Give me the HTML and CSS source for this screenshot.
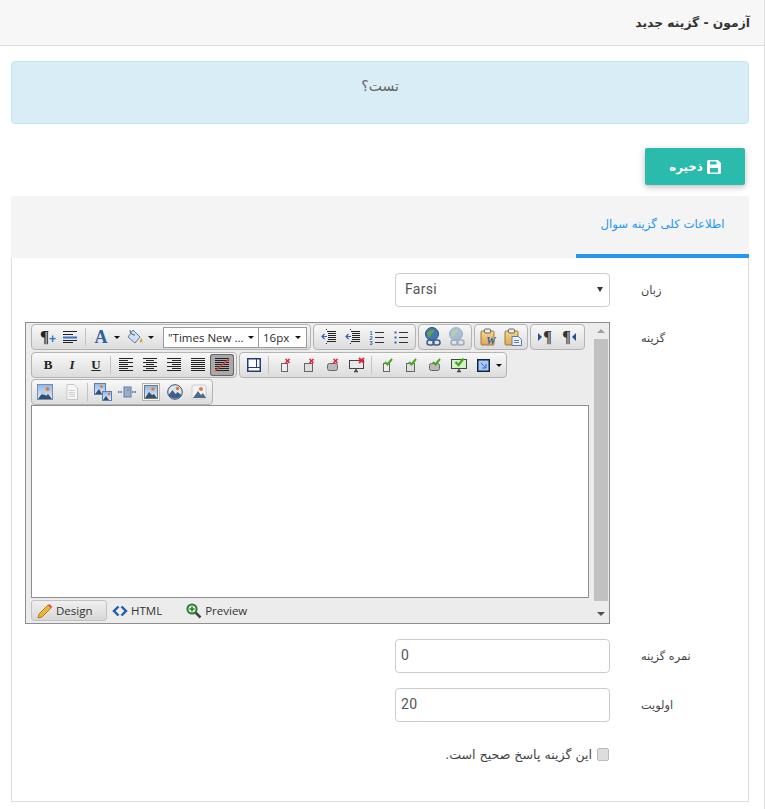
FILE: index.html
```html
<!DOCTYPE html>
<html lang="fa" dir="rtl">
<head>
<meta charset="utf-8">
<title>آزمون - گزینه جدید</title>
<link rel="stylesheet" href="styles.css">
</head>
<body>
<svg class="defs" width="0" height="0" aria-hidden="true">
  <defs>
    <linearGradient id="sky" x1="0" y1="0" x2="0" y2="1"><stop offset="0" stop-color="#8fb6e8"/><stop offset="1" stop-color="#e6eefa"/></linearGradient>
    <linearGradient id="clip" x1="0" y1="0" x2="0" y2="1"><stop offset="0" stop-color="#f6d68c"/><stop offset="1" stop-color="#e0a850"/></linearGradient>
    <symbol id="pic" viewBox="0 0 16 16"><rect x=".5" y=".5" width="15" height="15" fill="url(#sky)" stroke="#6f8fb5"/><circle cx="10.500" cy="5" r="2" fill="#e8793a"/><path d="M1 15l5-7 3 4 2-2 4 5z" fill="#34506e"/><path d="M6 8l-2 3 2-1 1 1 1-.5z" fill="#dfe8f2"/></symbol>
    <symbol id="pic2" viewBox="0 0 16 16"><rect x="1" y="1" width="14" height="14" rx="2" fill="#f3f4f6" stroke="#c9ced6"/><circle cx="10" cy="5" r="2" fill="#e8793a"/><path d="M2 14l5-7 3 4 2-2 3 5z" fill="#4f6b8a"/></symbol>
    <symbol id="doc" viewBox="0 0 16 16"><path d="M3 .5h7l3.500 3.500v11.500h-10.500z" fill="#f6f6f6" stroke="#c8c8c8"/><path d="M5 6.500h6M5 8.500h6M5 10.500h6M5 12.500h6" stroke="#cfcfcf"/></symbol>
    <symbol id="pics" viewBox="0 0 18 18"><rect x=".5" y=".5" width="11" height="11" fill="url(#sky)" stroke="#5d7ea8"/><circle cx="7.500" cy="3.500" r="1.500" fill="#e8793a"/><path d="M1 11l4-5 3 5z" fill="#34506e"/><rect x="8.500" y="8.500" width="9" height="9" fill="url(#sky)" stroke="#5d7ea8"/><path d="M9 17l3-4 3 4z" fill="#34506e"/><circle cx="15" cy="11" r="1.200" fill="#e8793a"/></symbol>
    <symbol id="flash" viewBox="0 0 18 12"><rect x="6" y="1" width="7" height="10" fill="#8fb0d8" stroke="#5d7ea8"/><path d="M0 6h4M14 6h4" stroke="#5d7ea8" stroke-width="2" stroke-dasharray="1.500 1"/><circle cx="10" cy="4" r="1.200" fill="#e8793a"/></symbol>
    <symbol id="picbox" viewBox="0 0 18 18"><rect x=".5" y=".5" width="17" height="17" fill="#f4f4f4" stroke="#b5b5b5"/><rect x="2.500" y="2.500" width="13" height="13" fill="url(#sky)" stroke="#777"/><circle cx="11" cy="6" r="1.800" fill="#e8793a"/><path d="M3 15l4-6 3 3 2-1 3 4z" fill="#34506e"/></symbol>
    <symbol id="link" viewBox="0 0 18 20"><circle cx="8" cy="7" r="6.500" fill="#3f78b8" stroke="#2f4f78"/><path d="M3 6c2-3 5-4 7-3 1 2-2 3-3 5s-2 3-3 2z" fill="#5fa24a"/><rect x="3" y="13" width="7" height="5" rx="2.500" fill="none" stroke="#3f5e85" stroke-width="1.500"/><rect x="9" y="13" width="7" height="5" rx="2.500" fill="none" stroke="#3f5e85" stroke-width="1.500"/></symbol>
    <symbol id="tick-sm" viewBox="0 0 14 16"><rect x="3.500" y="6.500" width="6" height="8" fill="#eee" stroke="#666"/><path d="M5 5l2.500 2.500L12 2" fill="none" stroke="#45a820" stroke-width="2"/></symbol>
    <symbol id="tick-md" viewBox="0 0 14 16"><rect x="2.500" y="6.500" width="8" height="8" fill="#ddd" stroke="#666"/><path d="M5 5l2.500 2.500L12 2" fill="none" stroke="#45a820" stroke-width="2"/></symbol>
    <symbol id="tick-lg" viewBox="0 0 14 16"><rect x="1.500" y="6.500" width="10" height="7" rx="2" fill="#bbb" stroke="#666"/><path d="M5 5l2.500 2.500L12 2" fill="none" stroke="#45a820" stroke-width="2"/></symbol>
    <symbol id="tick-mon" viewBox="0 0 16 16"><rect x=".5" y="2.500" width="15" height="9" fill="#d6f0c8" stroke="#444"/><path d="M6 14.500h4M8 12v2" stroke="#444" stroke-width="1.500"/><path d="M4.500 5l3 3 5-6.500" fill="none" stroke="#3fa81c" stroke-width="2.200"/></symbol>
    <symbol id="x-sm" viewBox="0 0 14 16"><rect x="3.500" y="6.500" width="6" height="8" fill="#eee" stroke="#666"/><path d="M7.500 2l4 4M11.500 2l-4 4" stroke="#ee2040" stroke-width="1.700"/></symbol>
    <symbol id="x-md" viewBox="0 0 14 16"><rect x="2.500" y="6.500" width="8" height="8" fill="#ddd" stroke="#666"/><path d="M7.500 2l4 4M11.500 2l-4 4" stroke="#ee2040" stroke-width="1.700"/></symbol>
    <symbol id="x-lg" viewBox="0 0 14 16"><rect x="1.500" y="6.500" width="10" height="7" rx="2" fill="#bbb" stroke="#666"/><path d="M7.500 2l4 4M11.500 2l-4 4" stroke="#ee2040" stroke-width="1.700"/></symbol>
    <symbol id="x-mon" viewBox="0 0 16 16"><rect x=".5" y="3.500" width="14" height="8" fill="#e8e8e8" stroke="#444"/><path d="M5 14.500h4M7 12v2" stroke="#444" stroke-width="1.500"/><path d="M10 1l5 5M15 1l-5 5" stroke="#ee2040" stroke-width="1.800"/></symbol>
    <symbol id="indent" viewBox="0 0 16 16"><path d="M6 2.500h9M7 4.500h8M7 6.500h8M7 8.500h8M7 10.500h8M6 12.500h9M5 .5h1M5 14.500h1" stroke="#222"/><path d="M6 7.500H1M3.500 5L1 7.500 3.500 10" stroke="#2f62b8" fill="none" stroke-width="1.200"/></symbol>
    <symbol id="olist" viewBox="0 0 16 16"><path d="M6 3.500h9M6 8.500h9M6 13.500h9" stroke="#333" stroke-width="1.200"/><text class="num" x=".5" y="5.500">1</text><text class="num" x=".5" y="10.500">2</text><text class="num" x=".5" y="15.500">3</text></symbol>
    <symbol id="ulist" viewBox="0 0 16 16"><path d="M6 3.500h9M6 8.500h9M6 13.500h9" stroke="#333" stroke-width="1.200"/><path d="M1.500 2.500h2v2h-2zM1.500 7.500h2v2h-2zM1.500 12.500h2v2h-2z" fill="#2f62b8"/></symbol>
    <symbol id="align-l" viewBox="0 0 16 14"><path d="M1 .5h14M1 2.500h9M1 4.500h14M1 6.500h9M1 8.500h14M1 10.500h9M1 12.500h14" stroke="#222"/></symbol>
    <symbol id="align-c" viewBox="0 0 16 14"><path d="M1 .5h14M4 2.500h8M1 4.500h14M4 6.500h8M1 8.500h14M4 10.500h8M1 12.500h14" stroke="#222"/></symbol>
    <symbol id="align-r" viewBox="0 0 16 14"><path d="M1 .5h14M6 2.500h9M1 4.500h14M6 6.500h9M1 8.500h14M6 10.500h9M1 12.500h14" stroke="#222"/></symbol>
    <symbol id="align-j" viewBox="0 0 16 14"><path d="M1 .5h14M1 2.500h14M1 4.500h14M1 6.500h14M1 8.500h14M1 10.500h14M1 12.500h14" stroke="#222"/></symbol>
  </defs>
</svg>

<div class="page">
  <header class="page-head"><h1 class="page-title">آزمون - گزینه جدید</h1></header>

  <main class="content">
    <div class="alert">تست؟</div>

    <div class="actions">
      <button class="save-btn" type="button">
        <svg class="save-ico" viewBox="0 0 14 14" width="14" height="14"><path d="M0 1.500A1.500 1.500 0 0 1 1.500 0H11l3 3v9.500a1.500 1.500 0 0 1-1.500 1.500h-11A1.500 1.500 0 0 1 0 12.500z" fill="#fff"/><rect x="3" y="1.500" width="6.500" height="3" fill="#2bbbad"/><rect x="3" y="8" width="8" height="4.500" fill="#2bbbad"/></svg>
        <span>ذخیره</span>
      </button>
    </div>

    <nav class="tabs"><a class="tab tab-active">اطلاعات کلی گزینه سوال</a></nav>

    <section class="panel">
      <div class="form-row">
        <label class="field-label">زبان</label>
        <div class="select-box" dir="ltr"><span>Farsi</span><i class="select-caret"></i></div>
      </div>

      <div class="form-row">
        <label class="field-label editor-label">گزینه</label>
        <div class="editor" dir="ltr">
          <div class="editor-main">
            <div class="tool-row">
              <div class="tool-group">
                <span class="btn txt-para">¶<b>+</b></span>
                <span class="btn narrow"><svg width="16" height="14" viewBox="0 0 16 14"><path d="M1 1.500h14M1 4.500h10" stroke="#222"/><path d="M1 7.500h14" stroke="#3a6cc8" stroke-width="2"/><path d="M1 10.500h14M1 12.500h10" stroke="#222"/></svg></span>
                <i class="sep"></i>
                <span class="btn txt-a">A</span><i class="caret"></i>
                <span class="btn"><svg width="18" height="16" viewBox="0 0 18 16"><path d="M7 1l7 7-5 6-7-6z" fill="#cfe0f4" stroke="#5f7fa8"/><path d="M4 1c0 3 2 5 5 5" fill="none" stroke="#555"/><path d="M15 9c1.500 2 2 3 1 4s-3 0-2-1z" fill="#e89a30"/></svg></span><i class="caret"></i>
                <span class="combo combo-font"><span>"Times New ...</span><i class="caret combo-caret"></i></span>
                <span class="combo combo-size"><span>16px</span><i class="caret combo-caret"></i></span>
              </div>
              <div class="tool-group group-tight group-left3">
                <span class="btn"><svg class="i16"><use href="#indent"/></svg></span>
                <span class="btn"><svg class="i16"><use href="#indent"/></svg></span>
                <span class="btn"><svg class="i16"><use href="#olist"/></svg></span>
                <span class="btn"><svg class="i16"><use href="#ulist"/></svg></span>
              </div>
              <div class="tool-group group-tight">
                <span class="btn"><svg width="18" height="20"><use href="#link"/></svg></span>
                <span class="btn faded"><svg width="18" height="20"><use href="#link"/></svg></span>
              </div>
              <div class="tool-group group-tight">
                <span class="btn"><svg width="18" height="18" viewBox="0 0 18 18"><rect x="1" y="3" width="13" height="14" rx="1" fill="url(#clip)" stroke="#9a7a40"/><rect x="4.500" y="1" width="6" height="4" rx="1" fill="#eee" stroke="#666"/><text class="word-w" x="6" y="16">W</text></svg></span>
                <span class="btn"><svg width="18" height="18" viewBox="0 0 18 18"><rect x="1" y="3" width="13" height="14" rx="1" fill="url(#clip)" stroke="#9a7a40"/><rect x="4.500" y="1" width="6" height="4" rx="1" fill="#eee" stroke="#666"/><path d="M8 8.500h6.500l3 3v6H8z" fill="#eaf1fa" stroke="#5d7ea8"/><path d="M10 12.500h5M10 14.500h5" stroke="#5d7ea8"/></svg></span>
              </div>
              <div class="tool-group group-tight group-wide">
                <span class="btn txt-dir"><i class="arrow-r"></i>¶</span>
                <span class="btn txt-dir">¶<i class="arrow-l"></i></span>
              </div>
            </div>

            <div class="tool-row">
              <div class="tool-group group-end2">
                <span class="btn txt-b">B</span>
                <span class="btn txt-i">I</span>
                <span class="btn txt-u">U</span>
                <i class="sep"></i>
                <span class="btn"><svg width="16" height="14"><use href="#align-l"/></svg></span>
                <span class="btn"><svg width="16" height="14"><use href="#align-c"/></svg></span>
                <span class="btn"><svg width="16" height="14"><use href="#align-r"/></svg></span>
                <span class="btn"><svg width="16" height="14"><use href="#align-j"/></svg></span>
                <span class="btn btn-on"><svg width="16" height="14" viewBox="0 0 16 14"><path d="M1 .5h14M1 2.500h14M1 4.500h14M1 6.500h14M1 8.500h14M1 10.500h14M1 12.500h14" stroke="#222"/><path d="M1 13L15 1" stroke="#e8402a" stroke-width="1.300"/></svg></span>
              </div>
              <div class="tool-group group-objects">
                <span class="btn"><svg width="14" height="14" viewBox="0 0 14 14"><rect x=".75" y=".75" width="12.500" height="12.500" fill="#fff" stroke="#1f3f7a" stroke-width="1.500"/><path d="M9.500 1v9M1 9.500h12" stroke="#1f3f7a"/></svg></span>
                <i class="sep sep-wide"></i>
                <span class="btn"><svg width="14" height="16"><use href="#x-sm"/></svg></span>
                <span class="btn"><svg width="14" height="16"><use href="#x-md"/></svg></span>
                <span class="btn"><svg width="14" height="16"><use href="#x-lg"/></svg></span>
                <span class="btn"><svg width="16" height="16"><use href="#x-mon"/></svg></span>
                <i class="sep"></i>
                <span class="btn"><svg width="14" height="16"><use href="#tick-sm"/></svg></span>
                <span class="btn"><svg width="14" height="16"><use href="#tick-md"/></svg></span>
                <span class="btn"><svg width="14" height="16"><use href="#tick-lg"/></svg></span>
                <span class="btn"><svg width="16" height="16"><use href="#tick-mon"/></svg></span>
                <span class="btn"><svg width="13" height="13" viewBox="0 0 13 13"><rect x=".75" y=".75" width="11.500" height="11.500" fill="#a9c8f4" stroke="#14233f" stroke-width="1.500"/><path d="M4 4l5 5M9 5v4H5" fill="none" stroke="#2f6fd0"/></svg></span><i class="caret caret-end"></i>
              </div>
            </div>

            <div class="tool-row">
              <div class="tool-group group-images">
                <span class="btn"><svg class="i16"><use href="#pic"/></svg></span>
                <span class="btn btn-slim"><svg class="i16"><use href="#doc"/></svg></span>
                <i class="sep"></i>
                <span class="btn"><svg width="18" height="18"><use href="#pics"/></svg></span>
                <span class="btn"><svg width="18" height="12"><use href="#flash"/></svg></span>
                <span class="btn"><svg width="18" height="18"><use href="#picbox"/></svg></span>
                <span class="btn"><svg class="i16" viewBox="0 0 16 16"><circle cx="8" cy="8" r="7.300" fill="#dfe6f0" stroke="#34506e"/><path d="M1.500 11l4-5 3 4 2-2 4 3c-2 4-10 5-13 0z" fill="#3f5e85"/><circle cx="10.500" cy="4.500" r="1.800" fill="#e8793a"/></svg></span>
                <span class="btn"><svg class="i16"><use href="#pic2"/></svg></span>
              </div>
            </div>

            <div class="edit-area"></div>

            <div class="mode-bar">
              <span class="mode mode-on"><svg width="16" height="16" viewBox="0 0 16 16"><path d="M11 2l3 3-9 9-4 1 1-4z" fill="#f2b632" stroke="#9c6a14" stroke-width=".8"/><path d="M11 2l1.500-1 3 3L14 5z" fill="#e5534b"/></svg>Design</span>
              <span class="mode mode-html"><svg width="16" height="12" viewBox="0 0 16 12"><path d="M6.500 1.500L2 6l4.500 4.500M9.500 1.500L14 6l-4.500 4.500" fill="none" stroke="#1f5fa8" stroke-width="2.400"/></svg>HTML</span>
              <span class="mode mode-prev"><svg width="16" height="16" viewBox="0 0 16 16"><path d="M9.500 9.500l5 5" stroke="#444" stroke-width="2.500"/><circle cx="6" cy="6" r="4.600" fill="#dff0d8" stroke="#2f7a34" stroke-width="2"/><path d="M3.500 6h5M6 3.500v5" stroke="#2f7a34" stroke-width="1.500"/></svg>Preview</span>
            </div>
          </div>
          <div class="scroll">
            <i class="scroll-up"></i>
            <i class="scroll-thumb"></i>
            <i class="scroll-down"></i>
          </div>
        </div>
      </div>

      <div class="form-row">
        <label class="field-label">نمره گزینه</label>
        <div class="input-box" dir="ltr">0</div>
      </div>

      <div class="form-row">
        <label class="field-label">اولویت</label>
        <div class="input-box" dir="ltr">20</div>
      </div>

      <div class="form-row check-row">
        <label class="check-label"><input class="check" type="checkbox"><span>این گزینه پاسخ صحیح است.</span></label>
      </div>
    </section>
  </main>
</div>
</body>
</html>
```
FILE: styles.css
```css
* { box-sizing: border-box; }
html, body { margin: 0; padding: 0; }
body {
  background: #fff;
  color: #444;
  font-family: "DejaVu Sans", Roboto, sans-serif;
  font-size: 12px;
  overflow: hidden;
}
.defs { position: absolute; }
.page { width: 765px; height: 809px; border-right: 1px solid #e0e0e0; }

.page-head {
  height: 46px;
  background: #f7f7f7;
  border-bottom: 1px solid #ddd;
  padding: 0 14px;
  display: flex;
  align-items: center;
}
.page-title { margin: 0; font-size: 12.300px; font-weight: 600; color: #333; }

.content { padding: 15px 15px 0 11px; }
.alert {
  height: 63px;
  background: #d9edf7;
  border: 1px solid #bce8f1;
  border-radius: 4px;
  padding-bottom: 13px;
  display: flex;
  align-items: center;
  justify-content: center;
  color: #666;
  font-size: 14px;
}

.actions { display: flex; padding: 24px 4px 0 0; }
.save-btn {
  width: 100px;
  height: 37px;
  background: #2bbbad;
  border: 0;
  border-radius: 2px;
  color: #fff;
  font: 600 11.700px "DejaVu Sans", sans-serif;
  display: flex;
  align-items: center;
  justify-content: center;
  gap: 4px;
  box-shadow: 0 2px 5px rgba(0,0,0,.16), 0 2px 10px rgba(0,0,0,.12);
}

.tabs {
  margin-top: 11px;
  height: 62px;
  background: #f4f4f4;
  display: flex;
}
.tab {
  width: 173px;
  padding-bottom: 2px;
  display: flex;
  align-items: center;
  justify-content: center;
  border-bottom: 4px solid #2196f3;
  color: #2196f3;
  font-size: 11.700px;
}

.panel {
  height: 544px;
  border: 1px solid #ddd;
  border-top: 0;
  padding-top: 15px;
  display: flex;
  flex-direction: column;
  gap: 15px;
}
.form-row { display: flex; align-items: center; }
.field-label {
  width: 107px;
  margin-left: 31px;
  text-align: left;
  font-size: 11.300px;
  color: #444;
}
.select-box, .input-box {
  width: 215px;
  height: 34px;
  border: 1px solid #ccc;
  border-radius: 4px;
  background: #fff;
  font: 14px Roboto, sans-serif;
  letter-spacing: .3px;
  color: #555;
  display: flex;
  align-items: center;
  padding-bottom: 2px;
}
.select-box { justify-content: space-between; padding-left: 9px; padding-right: 9px; }
.input-box { padding-left: 5px; }
.select-caret {
  border-left: 3.500px solid transparent;
  border-right: 3.500px solid transparent;
  border-top: 5px solid #333;
  margin-right: -3px;
}
.editor-label { align-self: flex-start; padding-top: 10px; }

.editor {
  width: 585px;
  height: 302px;
  background: #ececec;
  border: 1px solid #8e8e8e;
  display: flex;
  font: 11.500px "Open Sans", sans-serif;
}
.editor-main { width: 565px; padding: 1px 0 0 5px; display: flex; flex-direction: column; }
.tool-row { display: flex; gap: 2px; height: 28px; padding-bottom: 1px; }
.tool-row:nth-child(2) { height: 27px; padding-bottom: 0; }
.tool-row:nth-child(3) { height: 26px; padding-bottom: 0; }
.tool-group {
  display: flex;
  align-items: center;
  height: 26px;
  padding: 0 3px 0 4px;
  border: 1px solid #b4b4b4;
  border-radius: 4px;
  background: linear-gradient(#f8f8f8, #dcdcdc);
}
.group-tight { padding: 0 2px; }
.group-left3 { padding-left: 3px; }
.group-wide { padding-right: 3px; }
.group-end2 { padding-right: 2px; }
.group-objects { padding: 0 2px; }
.group-images { padding: 0 1px; }
.btn {
  width: 24px;
  height: 22px;
  flex: none;
  display: flex;
  align-items: center;
  justify-content: center;
  color: #222;
  border-radius: 3px;
}
.btn.narrow { width: 20px; }
.narrow + .sep { margin-left: 5px; }
.btn-slim { width: 28px; padding-left: 2px; }
.btn-on {
  background: #aaa9a9;
  box-shadow: inset 0 0 0 1px #666;
}
.faded { opacity: .4; }
.i16 { width: 16px; height: 16px; }
.sep { width: 1px; height: 18px; margin: 0 3px 0 2px; background: #c4c4c4; flex: none; }
.sep-wide { margin-right: 4px; }
.caret {
  flex: none;
  width: 0;
  height: 0;
  margin: 0 3px 0 1px;
  border-left: 3px solid transparent;
  border-right: 3px solid transparent;
  border-top: 3px solid #111;
}
.caret-end { margin-right: 2px; }
.combo {
  height: 21px;
  background: #fff;
  border: 1px solid #9c9c9c;
  display: flex;
  align-items: center;
  justify-content: space-between;
  padding: 0 4px;
  color: #2a2a2a;
  white-space: nowrap;
}
.combo-font { width: 96px; margin-left: 6px; padding-right: 3px; }
.combo-size { width: 49px; margin-left: -1px; }
.combo-caret { margin: 0 1px 0 0; }

.txt-para { font: 700 17px "Liberation Serif", serif; }
.txt-para b { color: #2f72c8; font: 700 12px "Liberation Sans", sans-serif; margin-top: 4px; }
.txt-a { font: 700 18px "Liberation Serif", serif; color: #2f5f9f; }
.txt-b { font: 900 13px "Liberation Serif", serif; }
.txt-i { font: italic 700 13px "Liberation Serif", serif; }
.txt-u { font: 700 13px "Liberation Serif", serif; text-decoration: underline; }
.txt-dir { font: 700 16px "Liberation Serif", serif; color: #333; }
.arrow-r, .arrow-l { width: 0; height: 0; border-top: 4px solid transparent; border-bottom: 4px solid transparent; }
.arrow-r { border-left: 4px solid #1f4f98; margin-right: 1px; }
.arrow-l { border-right: 4px solid #1f4f98; margin-left: 1px; }
.word-w { font: italic 700 11px "Liberation Serif", serif; fill: #2f62b8; }
.num { font: 700 5.500px "Liberation Sans", sans-serif; fill: #2f62b8; }

.edit-area { width: 558px; height: 193px; background: #fff; border: 1px solid #8e8e8e; flex: none; }
.mode-bar { display: flex; align-items: center; height: 24px; padding-top: 1px; color: #333; }
.mode { display: flex; align-items: center; gap: 3px; height: 21px; }
.mode-on {
  width: 76px;
  padding-left: 5px;
  border: 1px solid #c2c2c2;
  border-radius: 3px;
  background: linear-gradient(#f0f0f0, #d8d8d8);
}
.mode-html { margin-left: 5px; }
.mode-prev { margin-left: 24px; }

.scroll { width: 17px; padding: 1px 0 2px; margin-left: 1px; display: flex; flex-direction: column; align-items: center; justify-content: space-between; }
.scroll-up, .scroll-down { width: 0; height: 0; border-left: 4px solid transparent; border-right: 4px solid transparent; margin: 5px 0; }
.scroll-up { border-bottom: 4px solid #a0a0a0; }
.scroll-down { border-top: 4px solid #505050; }
.scroll-thumb { width: 14px; flex: 1; background: #c1c1c1; margin: 1px 0 6px; }

.check-row { padding: 10px 139px 0 0; }
.check-label { display: flex; align-items: center; gap: 5px; color: #444; font-size: 12.600px; }
.check {
  appearance: none;
  margin: 0;
  width: 12px;
  height: 13px;
  background: #ddd;
  border: 1px solid #bbb;
  border-radius: 2px;
}
```
